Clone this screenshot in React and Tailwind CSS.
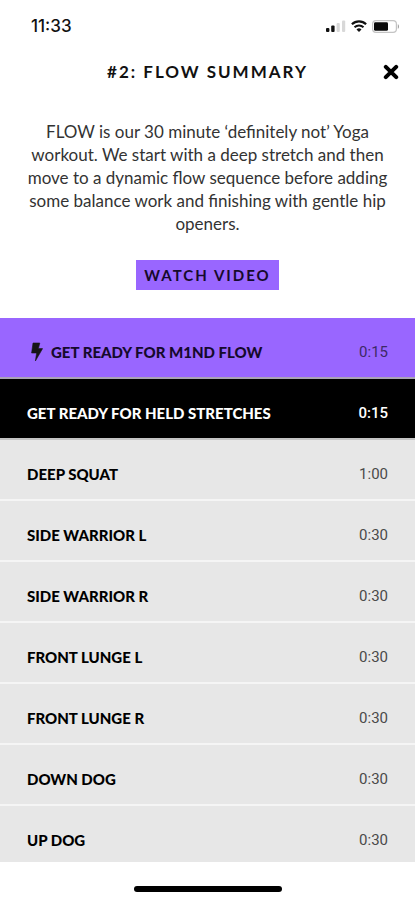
// src/App.jsx
import { clsx } from "clsx";

const EXERCISES = [
  { name: "GET READY FOR M1ND FLOW", time: "0:15", variant: "purple" },
  { name: "GET READY FOR HELD STRETCHES", time: "0:15", variant: "black" },
  { name: "DEEP SQUAT", time: "1:00" },
  { name: "SIDE WARRIOR L", time: "0:30" },
  { name: "SIDE WARRIOR R", time: "0:30" },
  { name: "FRONT LUNGE L", time: "0:30" },
  { name: "FRONT LUNGE R", time: "0:30" },
  { name: "DOWN DOG", time: "0:30" },
  { name: "UP DOG", time: "0:30" },
];

const ROW_STYLES = {
  purple: "bg-[#9966ff] border-[#a9a3b5] text-[#160a2c]",
  black: "bg-black border-[#c4c4c4] text-white",
  gray: "bg-[#e7e7e7] border-[#f5f5f5] text-black",
};

const TIME_STYLES = {
  purple: "text-[#3d2966]",
  black: "text-white font-medium",
  gray: "text-[#4a4a4a]",
};

function SignalIcon() {
  return (
    <svg viewBox="0 0 20 12" className="h-3 w-5" aria-hidden="true">
      <rect x="0" y="8" width="3.4" height="4" rx="1" fill="#111" />
      <rect x="5.2" y="5.5" width="3.4" height="6.5" rx="1" fill="#111" />
      <rect x="10.6" y="3" width="3.2" height="9" rx="1" fill="#d8d8d8" />
      <rect x="16" y="0.5" width="3.2" height="11.5" rx="1" fill="#d8d8d8" />
    </svg>
  );
}

function WifiIcon() {
  return (
    <svg viewBox="0 0 16 12" className="h-3 w-4" fill="none" aria-hidden="true">
      <path d="M0.9 4.2a10.2 10.2 0 0 1 14.2 0" stroke="#111" strokeWidth="2.2" />
      <path d="M3.5 7.2a6.5 6.5 0 0 1 9 0" stroke="#111" strokeWidth="2" />
      <path d="M8 12 5.5 9.5a3.6 3.6 0 0 1 5 0Z" fill="#111" />
    </svg>
  );
}

function BatteryIcon() {
  return (
    <svg viewBox="0 0 28 13" className="h-[13px] w-7" fill="none" aria-hidden="true">
      <rect x="0.6" y="0.6" width="23.8" height="11.8" rx="3.4" stroke="#c4c4c4" strokeWidth="1.2" />
      <rect x="2" y="2.2" width="14" height="8.6" rx="1.4" fill="#0a0a0a" />
      <path d="M25.8 4.2c1.5.5 1.5 4.1 0 4.6Z" fill="#999" />
    </svg>
  );
}

function BoltIcon() {
  return (
    <svg viewBox="0 0 12 20" className="h-5 w-3" aria-hidden="true">
      <path
        d="M2 1H8.8L7.4 6.6H11.6L4.4 19 5.6 11H0.6Z"
        fill="#151515"
        stroke="#151515"
        strokeWidth="0.6"
        strokeLinejoin="round"
      />
    </svg>
  );
}

function CloseIcon() {
  return (
    <svg viewBox="0 0 16 16" className="size-4" fill="none" aria-hidden="true">
      <path d="M2.8 2.8 13.2 13.2M13.2 2.8 2.8 13.2" stroke="#000" strokeWidth="4" strokeLinecap="round" />
    </svg>
  );
}

function StatusBar() {
  return (
    <div className="flex items-center justify-between pt-4 pr-[15px] pl-[31px]">
      <span className="font-['Inter',sans-serif] text-[17px] leading-5 font-medium text-[#111]">
        11:33
      </span>
      <div className="flex items-center gap-[5px]">
        <SignalIcon />
        <WifiIcon />
        <BatteryIcon />
      </div>
    </div>
  );
}

function ExerciseRow({ name, time, variant = "gray" }) {
  return (
    <li
      className={clsx(
        "flex items-center justify-between border-b-2 px-[27px] pt-6 pb-[15px] leading-5",
        ROW_STYLES[variant]
      )}
    >
      <span className="flex items-center gap-2 text-[15px] leading-5 font-black">
        {variant === "purple" ? (
          <span className="pl-1">
            <BoltIcon />
          </span>
        ) : null}
        {name}
      </span>
      <span
        className={clsx(
          "font-['Roboto',sans-serif] text-[15px] leading-5",
          TIME_STYLES[variant]
        )}
      >
        {time}
      </span>
    </li>
  );
}

export default function App() {
  return (
    <div className="flex h-screen flex-col bg-white font-['Lato',sans-serif]">
      <StatusBar />

      <header className="grid grid-cols-[1fr_auto_1fr] items-center px-4 pt-6">
        <h1 className="col-start-2 text-[17px] leading-6 font-bold tracking-[2px] text-[#111]">
          #2: FLOW SUMMARY
        </h1>
        <button type="button" aria-label="Close" className="justify-self-end">
          <CloseIcon />
        </button>
      </header>

      <section className="flex flex-col items-center px-5 pt-9 pb-7">
        <p className="text-center text-[17px] leading-[23px] text-[#333]">
          FLOW is our 30 minute ‘definitely not’ Yoga workout. We start with a deep
          stretch and then move to a dynamic flow sequence before adding some balance
          work and finishing with gentle hip openers.
        </p>
        <button
          type="button"
          className="mt-[25px] bg-[#9966ff] px-2 py-[5px] text-[15px] leading-5 font-bold tracking-[2px] text-[#160a2c]"
        >
          WATCH VIDEO
        </button>
      </section>

      <ul className="min-h-0 flex-1 overflow-y-auto [scrollbar-width:none]">
        {EXERCISES.map((exercise) => (
          <ExerciseRow key={exercise.name} {...exercise} />
        ))}
      </ul>

      <footer className="flex shrink-0 justify-center pt-6 pb-2">
        <div className="h-[6px] w-[148px] rounded-full bg-black" />
      </footer>
    </div>
  );
}
